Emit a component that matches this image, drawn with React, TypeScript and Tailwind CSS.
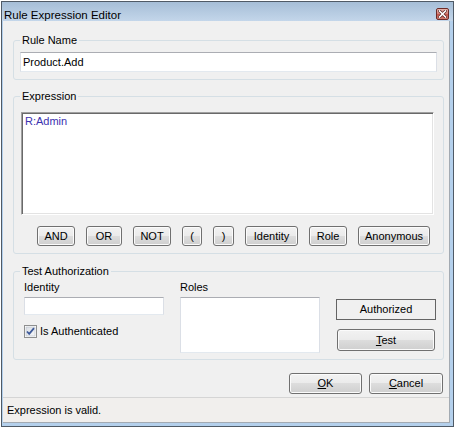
import React from "react";

const font = "font-['Liberation_Sans',Arial,sans-serif]";

const btn =
  "flex items-center justify-center h-[20px] rounded-[3px] border border-[#707070] bg-[linear-gradient(#f2f2f2,#ebebeb_50%,#dddddd_50%,#cfcfcf)] shadow-[inset_0_0_0_1px_#fbfbfb] text-[11px] leading-[13px] text-black";

const textbox =
  "bg-white border border-[#dbdfe6] border-t-[#abadb3] border-b-[#e3e9ef]";

const OPERATORS = [
  { label: "AND", w: "w-[38px]" },
  { label: "OR", w: "w-[36px]" },
  { label: "NOT", w: "w-[38px]" },
  { label: "(", w: "w-[20px]" },
  { label: ")", w: "w-[21px]" },
  { label: "Identity", w: "w-[53px]" },
  { label: "Role", w: "w-[38px]" },
  { label: "Anonymous", w: "w-[72px]" },
];

const CloseButton = () => (
  <div className="mt-[6px] w-[13px] h-[12px] rounded-[2px] border border-[#6d2b27] bg-[linear-gradient(#e7b3ab,#d27d74_50%,#c2554b_50%,#d07a6e)] flex items-center justify-center">
    <svg width="9" height="8" viewBox="0 0 9 8">
      <path
        d="M1.5 1 L7.5 7 M7.5 1 L1.5 7"
        stroke="#5a2420"
        strokeWidth="3"
        strokeLinecap="square"
      />
      <path
        d="M1.5 1 L7.5 7 M7.5 1 L1.5 7"
        stroke="#ffffff"
        strokeWidth="1.6"
        strokeLinecap="square"
      />
    </svg>
  </div>
);

const CheckBox = () => (
  <svg width="13" height="13" viewBox="0 0 13 13">
    <defs>
      <linearGradient id="cb" x1="0" y1="0" x2="1" y2="1">
        <stop offset="0" stopColor="#d9dde3" />
        <stop offset="1" stopColor="#f7f8fa" />
      </linearGradient>
    </defs>
    <rect x="0.5" y="0.5" width="12" height="12" fill="#fff" stroke="#8e8f8f" />
    <rect x="2" y="2" width="9" height="9" fill="url(#cb)" stroke="#b7bec8" strokeWidth="0.6" />
    <path
      d="M3 6.5 L5.2 8.8 L10 3.2"
      fill="none"
      stroke="#3e5a9a"
      strokeWidth="1.8"
    />
  </svg>
);

const GroupBox = ({
  title,
  className,
  children,
}: {
  title: string;
  className?: string;
  children: React.ReactNode;
}) => (
  <fieldset
    className={`ml-[10px] w-[431px] px-[6px] border border-[#d5dfe5] rounded-[3px] ${className ?? ""}`}
  >
    <legend className="px-[2px] text-[11px] leading-[14px] text-black">
      {title}
    </legend>
    {children}
  </fieldset>
);

export default function App() {
  return (
    <div className={`w-[454px] h-[427px] bg-white overflow-hidden ${font}`}>
      <div className="mt-[1px] ml-[1px] w-[453px] h-[426px] border border-[#4f5a66] bg-[#b4d0ec] flex flex-col">
        {/* title bar */}
        <div className="h-[19px] flex justify-between pl-[2px] pr-[4px] bg-[linear-gradient(#a6bed7,#c3d6ea)]">
          <span className="mt-[6px] text-[11.5px] leading-[14px] text-black">
            Rule Expression Editor
          </span>
          <CloseButton />
        </div>

        <div className="flex">
          <div className="w-[1px]" />
          {/* client area */}
          <div className="w-[447px] h-[402px] bg-[#f0f0f0] border-r border-b border-[#a3aab2] flex flex-col">
            <GroupBox title="Rule Name" className="mt-[12px] pt-[5px] pb-[7px]">
              <div className={`h-[20px] w-[417px] ${textbox} flex items-center pl-[2px] text-[11px] text-black`}>
                Product.Add
              </div>
            </GroupBox>

            <GroupBox title="Expression" className="mt-[9px] pt-[9px] pb-[7px]">
              <div className="ml-[1px] w-[413px] h-[103px] bg-white border border-[#a0a0a0] border-r-white border-b-white shadow-[inset_1px_1px_0_#696969,inset_-1px_-1px_0_#e3e3e3] px-[3px] pt-[1px] text-[11px] leading-[14px] text-[#3b32b0]">
                R:Admin
              </div>
              <div className="mt-[11px] pl-[17px] flex gap-[11px]">
                {OPERATORS.map((op) => (
                  <div key={op.label} className={`${btn} ${op.w}`}>
                    {op.label}
                  </div>
                ))}
              </div>
            </GroupBox>

            <GroupBox title="Test Authorization" className="mt-[10px] pt-[3px] pb-[6px]">
              <div className="pl-[4px] flex gap-[16px] text-[11px] leading-[13px] text-black">
                <div className="w-[140px] flex flex-col">
                  <span>Identity</span>
                  <div className={`mt-[3px] h-[18px] ${textbox}`} />
                  <div className="mt-[10px] flex items-center gap-[3px]">
                    <CheckBox />
                    <span>Is Authenticated</span>
                  </div>
                </div>
                <div className="w-[140px] flex flex-col">
                  <span>Roles</span>
                  <div className={`mt-[3px] h-[56px] ${textbox}`} />
                </div>
                <div className="w-[100px] pt-[18px] flex flex-col">
                  <div className="h-[21px] border border-[#646464] flex items-center justify-center">
                    Authorized
                  </div>
                  <div className={`${btn} mt-[9px] ml-[1px] w-[98px] h-[22px]`}>
                    <span>
                      <span className="underline">T</span>est
                    </span>
                  </div>
                </div>
              </div>
            </GroupBox>

            <div className="mt-[13px] flex justify-end gap-[7px] pr-[6px]">
              <div className={`${btn} w-[73px] h-[21px]`}>
                <span>
                  <span className="underline">O</span>K
                </span>
              </div>
              <div className={`${btn} w-[74px] h-[21px]`}>
                <span>
                  <span className="underline">C</span>ancel
                </span>
              </div>
            </div>

            <div className="mt-[3px] flex-1 border-t border-[#d5d5d5] bg-[#f1efed] flex items-center pl-[4px] text-[11px] text-black">
              Expression is valid.
            </div>
          </div>
        </div>
      </div>
    </div>
  );
}
